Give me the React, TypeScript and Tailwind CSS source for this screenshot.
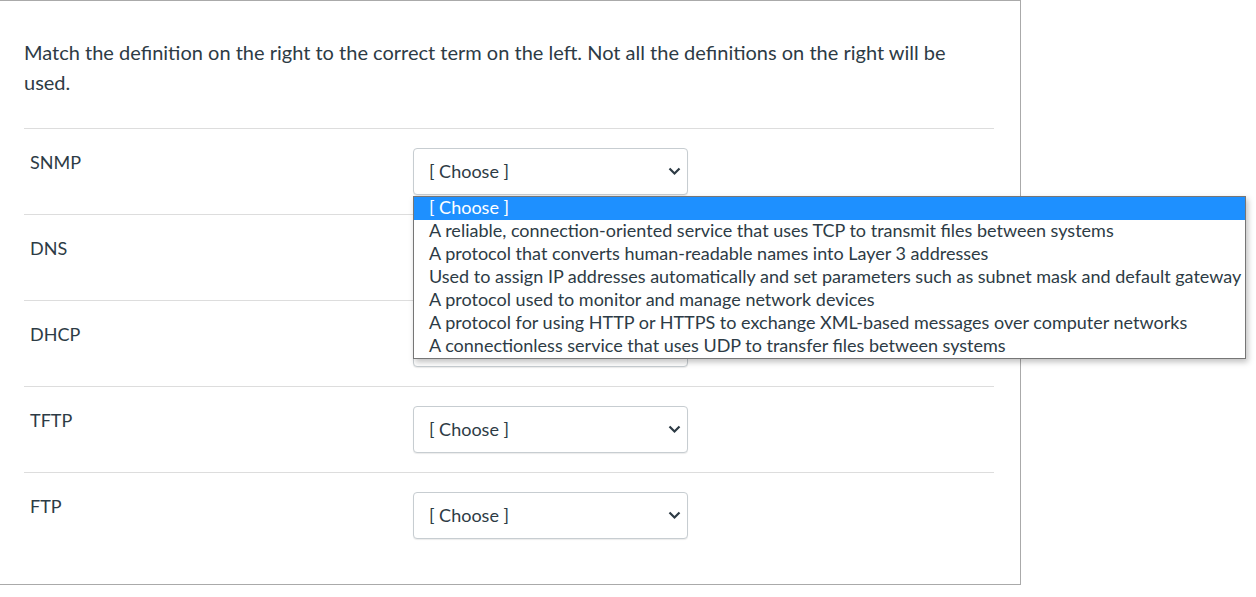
import React from "react";

const terms = ["SNMP", "DNS", "DHCP", "TFTP", "FTP"];

const options = [
  "[ Choose ]",
  "A reliable, connection-oriented service that uses TCP to transmit files between systems",
  "A protocol that converts human-readable names into Layer 3 addresses",
  "Used to assign IP addresses automatically and set parameters such as subnet mask and default gateway",
  "A protocol used to monitor and manage network devices",
  "A protocol for using HTTP or HTTPS to exchange XML-based messages over computer networks",
  "A connectionless service that uses UDP to transfer files between systems",
];

function Chevron() {
  return (
    <svg width="13" height="9" viewBox="0 0 13 9" className="text-[#2d3b45]">
      <path d="M1.5 1.5 L6.5 6.5 L11.5 1.5" fill="none" stroke="currentColor" strokeWidth="2.2" />
    </svg>
  );
}

function SelectBox({ open }: { open?: boolean }) {
  return (
    <div className="relative">
      <div className="flex h-[47px] w-[275px] items-center justify-between rounded-[4px] border border-[#c7cdd1] bg-white pl-[15px] pr-[6px] shadow-[0_1px_1px_rgba(0,0,0,0.08)]">
        <span className="text-[18px] text-[#2d3b45]">[ Choose ]</span>
        <Chevron />
      </div>
      {open && (
        <ul className="absolute left-0 top-[48px] z-10 border border-[#767676] bg-white py-0 shadow-[2px_3px_6px_rgba(0,0,0,0.25)]">
          {options.map((o, i) => (
            <li
              key={o}
              className={
                i === 0
                  ? "h-[23px] whitespace-nowrap bg-[#1e90ff] pl-[15px] pr-[4px] text-[18px] leading-[20px] text-white"
                  : "h-[23px] whitespace-nowrap pl-[15px] pr-[4px] text-[18px] leading-[20px] text-[#2d3b45]"
              }
            >
              {o}
            </li>
          ))}
        </ul>
      )}
    </div>
  );
}

export default function App() {
  return (
    <div className="min-h-[597px] bg-white font-['Lato','Open_Sans',sans-serif] text-[#2d3b45]">
      <div className="-ml-px h-[585px] w-[1022px] border border-[#aaaaaa] px-[24px] pt-[36px]">
        <p className="w-[940px] text-[20px] leading-[30px]">
          Match the definition on the right to the correct term on the left. Not all the definitions on the right will be used.
        </p>
        <div className="mt-[31px] w-[970px]">
          {terms.map((t, i) => (
            <div key={t} className="flex h-[86px] border-t border-[#dddddd] pt-[19px]">
              <div className="w-[389px] pl-[6px] pt-[1px] text-[18px] leading-[26px]">{t}</div>
              <SelectBox open={i === 0} />
            </div>
          ))}
        </div>
      </div>
    </div>
  );
}
